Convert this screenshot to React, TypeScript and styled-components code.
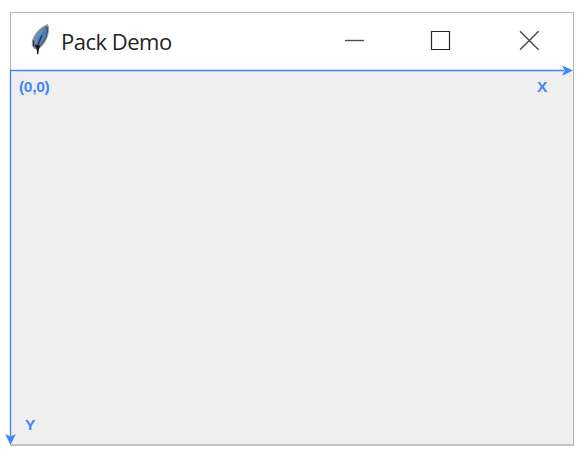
import React from "react";
import styled, { createGlobalStyle } from "styled-components";

const GlobalStyle = createGlobalStyle`
  * { box-sizing: border-box; }
  body { margin: 0; background: #fff; }
`;

const Page = styled.main`
  width: 584px;
  height: 460px;
  padding: 12px 10px 14px;
  overflow: hidden;
`;

const Window = styled.section`
  position: relative;
  display: flex;
  flex-direction: column;
  width: 564px;
  height: 434px;
  border: 1px solid #b4b4b4;
  border-bottom: 2px solid #c4c4c4;
`;

const TitleBar = styled.header`
  display: flex;
  align-items: center;
  flex: 0 0 58px;
  padding-left: 18px;
  background: #fff;
`;

const Feather = styled.svg`
  flex: none;
  width: 24px;
  height: 34px;
  margin-top: -5px;
`;

const Title = styled.h1`
  flex: 1;
  margin: -3px 0 0 8px;
  color: #242424;
  font: 400 22px/30px "Open Sans", sans-serif;
  letter-spacing: -0.5px;
  white-space: nowrap;
`;

const Controls = styled.div`
  display: flex;
`;

const ControlButton = styled.button<{ $width: number }>`
  display: flex;
  align-items: center;
  justify-content: center;
  width: ${({ $width }) => $width}px;
  height: 54px;
  padding: 0;
  border: 0;
  background: transparent;
`;

const ControlIcon = styled.svg`
  width: 20px;
  height: 20px;
  margin-top: -2px;
  overflow: visible;
`;

const Canvas = styled.div`
  display: flex;
  flex: 1;
  flex-direction: column;
  justify-content: space-between;
  padding: 7px 26px 10px 8px;
  background: #efefef;
`;

const LabelRow = styled.div<{ $indent?: number }>`
  display: flex;
  justify-content: space-between;
  padding-left: ${({ $indent = 0 }) => $indent}px;
`;

const AxisLabel = styled.span`
  color: #4285ff;
  font: 700 15.5px/18px "Liberation Sans", Arial, sans-serif;
  letter-spacing: -0.3px;
`;

const Axes = styled.svg`
  position: absolute;
  left: -11px;
  top: -13px;
  width: 584px;
  height: 460px;
  pointer-events: none;
`;

function FeatherIcon() {
  return (
    <Feather viewBox="0 0 24 34">
      <path d="M18.6 1.6 C12 4 6 10 3.7 17 C2.8 20 3.2 23 5.2 25.4 L9.2 26 C13.8 23 17.3 17.5 18.6 12.5 C19.6 9 20.1 4.5 18.6 1.6Z" fill="#8a8c8f" stroke="#9a9c9e" strokeWidth="1" />
      <path d="M17.7 3.8 C12.2 6.5 8 11 5.8 17 C5 20 5.8 22.4 7.2 24 C11.7 21.5 15.8 17 17 12 C17.7 9 18.4 6 17.7 3.8Z" fill="#4580bf" />
      <path d="M16.2 4.4 C18.7 3.3 19 6.5 18 10.5 C17 15.4 14 20 9.8 24" fill="none" stroke="#4a4e53" strokeWidth="1.1" />
      <path d="M14.2 7 C9.7 11.2 7 16.2 6.1 21" fill="none" stroke="#639bd0" strokeWidth="1.4" />
      <path d="M12.9 12.5 C10.8 16.5 9.5 19 8.8 23.5 M4.6 17.5 V23.5" fill="none" stroke="#20262d" strokeWidth="1.2" />
      <path d="M5.7 21.8 L11 22.4 L9.7 27.6 L9.3 31.3 L8.1 31.3 L7.8 27.2Z" fill="#141414" />
    </Feather>
  );
}

export default function App() {
  return (
    <>
      <GlobalStyle />
      <Page>
        <Window>
          <TitleBar>
            <FeatherIcon />
            <Title>Pack Demo</Title>
            <Controls>
              <ControlButton $width={86} aria-label="Minimize">
                <ControlIcon viewBox="0 0 20 20"><path d="M0 9.5H19" stroke="#4c4c4c" strokeWidth="1.4" /></ControlIcon>
              </ControlButton>
              <ControlButton $width={86} aria-label="Maximize">
                <ControlIcon viewBox="0 0 20 20"><path d="M.5 .5H18.5V18.5H.5Z" fill="none" stroke="#262626" strokeWidth="1.2" /></ControlIcon>
              </ControlButton>
              <ControlButton $width={89} aria-label="Close">
                <ControlIcon viewBox="0 0 20 20"><path d="M1 .2L19.6 18.8M19.6 .2L1 18.8" stroke="#454545" strokeWidth="1.35" /></ControlIcon>
              </ControlButton>
            </Controls>
          </TitleBar>
          <Canvas>
            <LabelRow>
              <AxisLabel>(0,0)</AxisLabel>
              <AxisLabel>X</AxisLabel>
            </LabelRow>
            <LabelRow $indent={6}>
              <AxisLabel>Y</AxisLabel>
            </LabelRow>
          </Canvas>
          <Axes viewBox="0 0 584 460">
            <path d="M564 70.5H10.5V436" fill="none" stroke="#4285ff" strokeWidth="1.4" />
            <path d="M573 70.6L562 65.4L564.7 70.6L562 75.8Z M10.5 445L5.2 434L10.5 436.5L15.8 434Z" fill="#3f84ff" />
          </Axes>
        </Window>
      </Page>
    </>
  );
}
